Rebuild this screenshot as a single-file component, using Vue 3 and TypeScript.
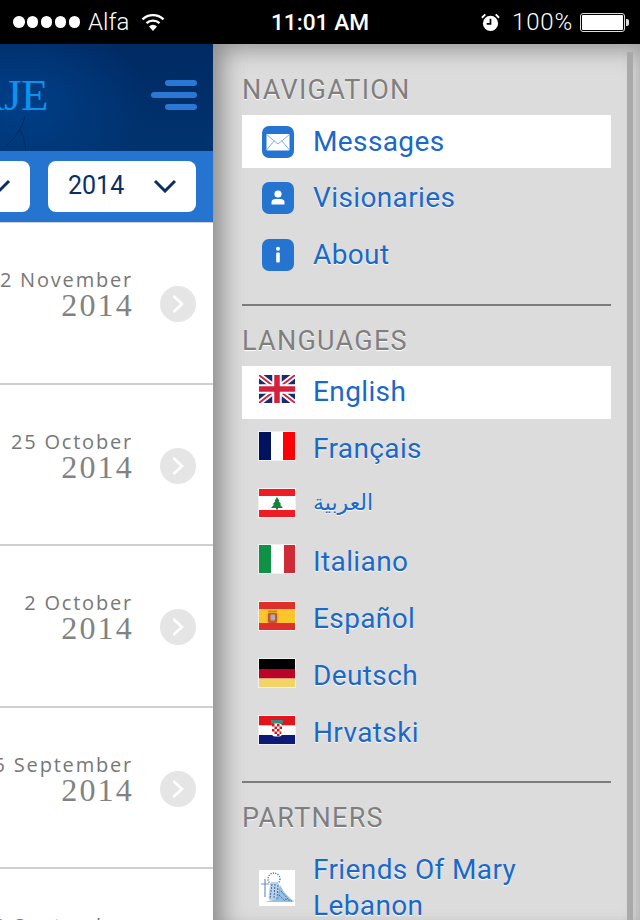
<script setup lang="ts">
const dates = [
  { day: '12 November', year: '2014' },
  { day: '25 October', year: '2014' },
  { day: '2 October', year: '2014' },
  { day: '25 September', year: '2014' },
  { day: '18 September', year: '2014' },
]
</script>

<template>
  <div class="phone">
    <header class="status">
      <div class="st-left">
        <span class="dots"><i /><i /><i /><i /><i /></span>
        <span class="carrier">Alfa</span>
        <svg class="wifi" width="24" height="18" viewBox="0 0 24 18">
          <path d="M12 18 L8 13.4 A6 6 0 0 1 16 13.4 Z" fill="#fff" />
          <path d="M5.5 10.2 A9.6 9.6 0 0 1 18.5 10.2" fill="none" stroke="#fff" stroke-width="2.4" />
          <path d="M1.5 6.3 A15.4 15.4 0 0 1 22.5 6.3" fill="none" stroke="#fff" stroke-width="2.4" />
        </svg>
      </div>
      <div class="st-time">11:01 AM</div>
      <div class="st-right">
        <svg class="alarm" width="19" height="19" viewBox="0 0 20 20">
          <circle cx="10" cy="11" r="8" fill="#fff" />
          <path d="M10 6 V11.5 H6" fill="none" stroke="#000" stroke-width="1.8" />
          <path d="M1 5 L4.5 1.5 M19 5 L15.5 1.5" stroke="#fff" stroke-width="2" />
        </svg>
        <span class="pct">100%</span>
        <span class="battery"><i /></span>
      </div>
    </header>

    <div class="body">
      <section class="main">
        <div class="brand">
          <span class="logo">MEDJUGORJE</span>
          <div class="burger"><i class="short" /><i /><i class="short" /></div>
          <svg class="swirl" width="60" height="107" viewBox="0 0 60 107">
            <path d="M25 72 Q22 88 6 102 M20 85 Q24 92 26 107" fill="none" stroke="#002a60" stroke-width="1" />
          </svg>
        </div>
        <div class="filters">
          <div class="select month">
            <span>November</span>
            <svg width="24" height="14" viewBox="0 0 24 14"><path d="M2 2 L12 12 L22 2" fill="none" stroke="#0b2f63" stroke-width="3" /></svg>
          </div>
          <div class="select year">
            <span>2014</span>
            <svg width="24" height="14" viewBox="0 0 24 14"><path d="M2 2 L12 12 L22 2" fill="none" stroke="#0b2f63" stroke-width="3" /></svg>
          </div>
        </div>
        <ul class="list">
          <li v-for="d in dates" :key="d.day" class="entry">
            <div class="date">
              <span class="day">{{ d.day }}</span>
              <span class="yr">{{ d.year }}</span>
            </div>
            <span class="go">
              <svg width="14" height="20" viewBox="0 0 14 20"><path d="M2.5 2 L11 10 L2.5 18" fill="none" stroke="#fff" stroke-width="2.6" /></svg>
            </span>
          </li>
        </ul>
      </section>

      <aside class="drawer">
        <div class="scroll" />
        <h2>NAVIGATION</h2>
        <a class="row on">
          <span class="ico">
            <svg width="32" height="32" viewBox="0 0 32 32">
              <rect x="4.5" y="8" width="23" height="16.5" rx="1" fill="#fff" />
              <path d="M4.5 8.5 L16 18 L27.5 8.5 M4.5 24 L12.5 14.5 M27.5 24 L19.5 14.5" fill="none" stroke="#7fb0e6" stroke-width="1" />
            </svg>
          </span>
          <span class="lbl">Messages</span>
        </a>
        <a class="row">
          <span class="ico">
            <svg width="32" height="32" viewBox="0 0 32 32">
              <circle cx="16" cy="12" r="3.6" fill="#fff" />
              <path d="M9.5 22.5 V20 Q9.5 17.6 13 17 L19 17 Q22.5 17.6 22.5 20 V22.5 Z" fill="#fff" />
            </svg>
          </span>
          <span class="lbl">Visionaries</span>
        </a>
        <a class="row">
          <span class="ico">
            <svg width="32" height="32" viewBox="0 0 32 32">
              <circle cx="16" cy="9.8" r="2" fill="#fff" />
              <rect x="14.2" y="13.5" width="3.6" height="10" rx="1" fill="#fff" />
            </svg>
          </span>
          <span class="lbl">About</span>
        </a>

        <hr />
        <h2>LANGUAGES</h2>

        <a class="row on">
          <svg class="flag" viewBox="0 0 36 28">
            <rect width="36" height="28" fill="#1c2a70" />
            <path d="M0 0 L36 28 M36 0 L0 28" stroke="#fff" stroke-width="5.5" />
            <path d="M0 0 L36 28 M36 0 L0 28" stroke="#d3203c" stroke-width="1.8" />
            <path d="M18 0 V28 M0 14 H36" stroke="#fff" stroke-width="9.5" />
            <path d="M18 0 V28 M0 14 H36" stroke="#d3203c" stroke-width="5.5" />
          </svg>
          <span class="lbl">English</span>
        </a>
        <a class="row">
          <svg class="flag" viewBox="0 0 36 28">
            <rect width="12" height="28" fill="#00135e" />
            <rect x="12" width="12" height="28" fill="#fff" />
            <rect x="24" width="12" height="28" fill="#fb0007" />
          </svg>
          <span class="lbl">Français</span>
        </a>
        <a class="row">
          <svg class="flag" viewBox="0 0 36 28">
            <rect width="36" height="28" fill="#fff" />
            <rect width="36" height="7" fill="#ee1c25" />
            <rect y="21" width="36" height="7" fill="#ee1c25" />
            <path d="M18 8 L20.5 12 H19.6 L22.4 15.5 H20.8 L24 19 H19 V20.5 H17 V19 H12 L15.2 15.5 H13.6 L16.4 12 H15.5 Z" fill="#17803a" />
          </svg>
          <span class="lbl ar" lang="ar" dir="rtl">العربية</span>
        </a>
        <a class="row">
          <svg class="flag" viewBox="0 0 36 28">
            <rect width="12" height="28" fill="#0f9146" />
            <rect x="12" width="13" height="28" fill="#fff" />
            <rect x="25" width="11" height="28" fill="#ce2b37" />
          </svg>
          <span class="lbl">Italiano</span>
        </a>
        <a class="row">
          <svg class="flag" viewBox="0 0 36 28">
            <rect width="36" height="28" fill="#de2f2b" />
            <rect y="7" width="36" height="14" fill="#fdc52c" />
            <rect x="8" y="11" width="11" height="10" rx="3" fill="#c8532c" />
            <rect x="11.5" y="12.5" width="4.5" height="6" rx="1" fill="#aab0b8" />
            <rect x="9" y="8.5" width="9" height="2" fill="#c08a20" />
            <rect x="7.5" y="11" width="1.5" height="9" fill="#e0b040" />
            <rect x="18" y="11" width="1.5" height="9" fill="#e0b040" />
          </svg>
          <span class="lbl">Español</span>
        </a>
        <a class="row">
          <svg class="flag" viewBox="0 0 36 28">
            <rect width="36" height="10" fill="#000" />
            <rect y="10" width="36" height="9.5" fill="#bb0228" />
            <rect y="19.5" width="36" height="8.5" fill="#f3d368" />
          </svg>
          <span class="lbl">Deutsch</span>
        </a>
        <a class="row">
          <svg class="flag" viewBox="0 0 36 28">
            <rect width="36" height="9.5" fill="#e0161c" />
            <rect y="9.5" width="36" height="9.5" fill="#fff" />
            <rect y="19" width="36" height="9" fill="#0e1a78" />
            <rect x="12" y="4" width="12" height="3.5" fill="#3f8a80" />
            <rect x="13" y="7.5" width="10" height="13" rx="3" fill="#fff" />
            <path d="M13 8 h2.5 v2.5 h-2.5z M18 8 h2.5 v2.5 h-2.5z M15.5 10.5 h2.5 v2.5 h-2.5z M20.5 10.5 h2.5 v2.5 h-2.5z M13 13 h2.5 v2.5 h-2.5z M18 13 h2.5 v2.5 h-2.5z M15.5 15.5 h2.5 v2.5 h-2.5z M20.5 15.5 h1.8 v2.5 h-1.8z M18 18 h2.5 v2 h-2.5z" fill="#d8141c" />
          </svg>
          <span class="lbl">Hrvatski</span>
        </a>

        <hr />
        <h2>PARTNERS</h2>

        <a class="row tall">
          <svg class="flag partner" viewBox="0 0 36 36">
            <rect width="36" height="36" fill="#fff" />
            <path d="M6 9 V27 M2 14 H10" stroke="#6f93bf" stroke-width="1.2" fill="none" />
            <circle cx="15" cy="9" r="6" fill="none" stroke="#54769f" stroke-width="1.3" stroke-dasharray="1.2 1.2" />
            <path d="M12 12 Q9 22 10 30 L20 30 Q23 20 19 12 Z" fill="#b7d2ea" />
            <path d="M13 14 L11 29 M16 14 L15 28 M19 15 L18 29" stroke="#3d5f8e" stroke-width=".9" stroke-dasharray="2 1" />
            <path d="M21 15 L25 22 L30 27 L35 32 H6 L18 29 Z" fill="#6ea6d6" opacity=".7" />
            <path d="M22 21 L29 29 M20 25 L26 31 M26 29 L33 31" stroke="#2f6dab" stroke-width=".9" stroke-dasharray="2 1" />
          </svg>
          <span class="lbl two">Friends Of Mary Lebanon</span>
        </a>
      </aside>
    </div>
  </div>
</template>

<style>
html, body { margin: 0; background: #000; }
</style>

<style scoped>
.phone {
  width: 640px;
  height: 920px;
  overflow: hidden;
  display: flex;
  flex-direction: column;
  font-family: Roboto, "Liberation Sans", sans-serif;
}

/* status bar */
.status {
  height: 44px;
  flex: none;
  background: #000;
  color: #fff;
  display: grid;
  grid-template-columns: 1fr auto 1fr;
  align-items: center;
  font-size: 24px;
  font-weight: 300;
}
.st-left { display: flex; align-items: center; padding-left: 13px; }
.dots { display: flex; gap: 2.4px; }
.dots i { width: 11.5px; height: 11.5px; border-radius: 50%; background: #fff; display: block; }
.carrier { margin-left: 8px; }
.wifi { margin-left: 12px; }
.st-time { font-weight: 500; font-size: 22.7px; }
.st-right { display: flex; align-items: center; justify-content: flex-end; padding-right: 11px; }
.alarm { margin-left: -2px; }
.pct { margin-left: 12px; letter-spacing: .8px; }
.battery {
  position: relative;
  margin-left: 7px;
  width: 45px;
  height: 19px;
  box-sizing: border-box;
  border: 1px solid #ddd;
  border-radius: 3px;
  padding: 1px;
  margin-right: 4px;
}
.battery i { display: block; height: 100%; background: #fff; border-radius: 1px; }
.battery::after {
  content: "";
  position: absolute;
  right: -5px;
  top: 5px;
  width: 3px;
  height: 7px;
  background: #ddd;
  border-radius: 0 2px 2px 0;
}

.body { flex: 1; display: flex; min-height: 0; }

/* main column */
.main { width: 213px; flex: none; display: flex; flex-direction: column; background: #fff; overflow: hidden; }
.brand {
  position: relative;
  height: 107px;
  flex: none;
  box-sizing: border-box;
  background: radial-gradient(ellipse 130px 90px at 20px 60px, #003f88, rgba(0, 63, 136, 0) 100%), linear-gradient(180deg, #002a63, #00336f);
  display: flex;
  align-items: center;
  justify-content: flex-end;
  padding: 0 16px 6px 0;
  gap: 103px;
}
.swirl { position: absolute; left: 0; top: 0; }
.logo {
  font-family: "Liberation Serif", serif;
  font-size: 45px;
  color: #0c93ee;
  white-space: nowrap;
  letter-spacing: -.5px;
}
.burger { width: 46px; flex: none; display: flex; flex-direction: column; align-items: flex-end; gap: 6px; }
.burger i { display: block; width: 46px; height: 6px; border-radius: 3px; background: #2a78d4; }
.burger i.short { width: 32px; }

.filters {
  height: 72px;
  flex: none;
  box-sizing: border-box;
  background: #2574d0;
  border-bottom: 1px solid #d0d0d0;
  display: flex;
  align-items: flex-start;
  justify-content: flex-end;
  gap: 18px;
  padding: 10px 17px 0 0;
}
.select {
  height: 51px;
  flex: none;
  box-sizing: border-box;
  background: #fff;
  border-radius: 8px;
  display: flex;
  align-items: center;
  justify-content: space-between;
  padding: 0 19px 2px 20px;
  color: #0b2f63;
  font-size: 25px;
}
.month { width: 190px; }
.year { width: 148px; }

.list { list-style: none; margin: 0; padding: 0; }
.entry {
  height: 161.6px;
  box-sizing: border-box;
  border-bottom: 2px solid #cfcfcf;
  display: flex;
  justify-content: flex-end;
  align-items: flex-start;
  padding: 45px 17px 0 0;
  gap: 27px;
}
.date {
  display: flex;
  flex-direction: column;
  align-items: flex-end;
  white-space: nowrap;
  color: #777;
}
.day { font-family: "Open Sans", sans-serif; font-size: 20px; line-height: 24px; letter-spacing: 1.8px; }
.yr {
  font-family: "Liberation Serif", serif;
  font-size: 32px;
  line-height: 28px;
  letter-spacing: 2.2px;
  margin: -1px -1px 0 0;
  color: #828282;
}
.go {
  width: 36px;
  height: 36px;
  margin-top: 18px;
  flex: none;
  border-radius: 50%;
  background: #e5e5e5;
  display: flex;
  align-items: center;
  justify-content: center;
}

/* drawer */
.drawer {
  position: relative;
  flex: 1;
  box-sizing: border-box;
  padding: 29px 29px 0 29px;
  background: #dcdcdc;
  box-shadow: inset 24px 0 22px -14px #8f8f8f, inset 0 22px 20px -14px #a3a3a3, inset -14px 0 14px -10px #b5b5b5;
  overflow: hidden;
}
.scroll {
  position: absolute;
  right: 7px;
  top: 8px;
  bottom: 0;
  width: 6px;
  background: #a9a9a9;
}
h2 {
  margin: 0 0 8px;
  font-size: 27px;
  line-height: 34px;
  height: 34px;
  font-weight: 400;
  letter-spacing: 1.25px;
  color: #7f7f7f;
  text-shadow: 0 1px 1px #fff;
}
.row {
  height: 53px;
  margin-bottom: 3.75px;
  display: flex;
  align-items: center;
  padding-left: 17px;
  position: relative;
  color: #1a68c9;
  text-decoration: none;
}
.row.on { background: #fff; }
.ico {
  width: 32px;
  height: 32px;
  margin-left: 3px;
  margin-right: 19px;
  flex: none;
  background: #2574d0;
  border-radius: 7px;
}
.ico svg { display: block; }
.flag {
  width: 36px;
  height: 28px;
  flex: none;
  margin-right: 18px;
  margin-top: -6px;
  display: block;
  box-shadow: 0 0 0 1px rgba(255, 255, 255, .6);
}
.lbl { font-size: 28px; line-height: 36px; letter-spacing: .38px; text-shadow: 0 1px 1px #fff; }
.ar { font-family: "DejaVu Sans", sans-serif; font-size: 22px; margin-top: -6px; letter-spacing: 0; }
hr {
  border: 0;
  height: 2px;
  background: #7c7c7c;
  margin: 22px 0 18px;
}
.row.tall { height: 72px; margin-top: 17px; }
.partner { height: 36px; margin-top: 0; box-shadow: none; }
.two { width: 240px; }
</style>
